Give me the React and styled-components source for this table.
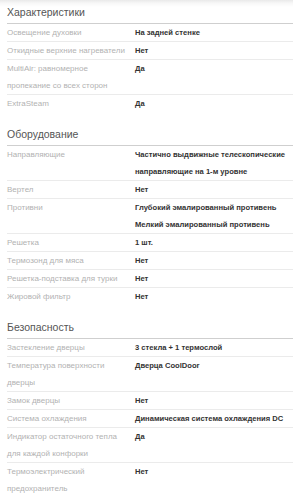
import React from "react";
import styled, { createGlobalStyle } from "styled-components";

const Global = createGlobalStyle`
  html, body { margin: 0; padding: 0; background: #fff; }
  body { font-family: "Liberation Sans", Arial, sans-serif; }
`;

const Page = styled.div`
  background: linear-gradient(#e9e9e9 0px, #f7f7f7 3px, #fff 7px);
  padding: 5px 0 0 7px;
  overflow: hidden;
`;

const Section = styled.section`
  & + & { margin-top: 15px; }
`;

const Title = styled.h2`
  margin: 0;
  font-size: 10.5px;
  line-height: 14px;
  font-weight: 400;
  color: #555;
  padding-bottom: 4px;
  border-bottom: 1px solid #cfcfcf;
`;

const Row = styled.div`
  display: grid;
  grid-template-columns: 128px 1fr;
  line-height: 17px;
  border-bottom: 1px solid #ebebeb;
  &:last-child { border-bottom: none; }
`;

const Label = styled.div`
  color: #b2b2b2;
  font-size: 8px;
  padding-right: 8px;
`;

const Value = styled.div`
  color: #333;
  font-size: 7.6px;
  font-weight: 700;
  padding-right: 6px;
`;

const data = [
  {
    title: "Характеристики",
    rows: [
      ["Освещение духовки", ["На задней стенке"]],
      ["Откидные верхние нагреватели", ["Нет"]],
      ["MultiAir: равномерное пропекание со всех сторон", ["Да"]],
      ["ExtraSteam", ["Да"]],
    ],
  },
  {
    title: "Оборудование",
    rows: [
      ["Направляющие", ["Частично выдвижные телескопические направляющие на 1-м уровне"]],
      ["Вертел", ["Нет"]],
      ["Противни", ["Глубокий эмалированный противень", "Мелкий эмалированный противень"]],
      ["Решетка", ["1 шт."]],
      ["Термозонд для мяса", ["Нет"]],
      ["Решетка-подставка для турки", ["Нет"]],
      ["Жировой фильтр", ["Нет"]],
    ],
  },
  {
    title: "Безопасность",
    rows: [
      ["Застекление дверцы", ["3 стекла + 1 термослой"]],
      ["Температура поверхности дверцы", ["Дверца CoolDoor"]],
      ["Замок дверцы", ["Нет"]],
      ["Система охлаждения", ["Динамическая система охлаждения DC"]],
      ["Индикатор остаточного тепла для каждой конфорки", ["Да"]],
      ["Термоэлектрический предохранитель", ["Нет"]],
    ],
  },
];

export default function App() {
  return (
    <>
      <Global />
      <Page>
        {data.map((s) => (
          <Section key={s.title}>
            <Title>{s.title}</Title>
            {s.rows.map(([l, v]) => (
              <Row key={l}>
                <Label>{l}</Label>
                <Value>
                  {v.map((line, i) => (
                    <div key={i}>{line}</div>
                  ))}
                </Value>
              </Row>
            ))}
          </Section>
        ))}
      </Page>
    </>
  );
}
